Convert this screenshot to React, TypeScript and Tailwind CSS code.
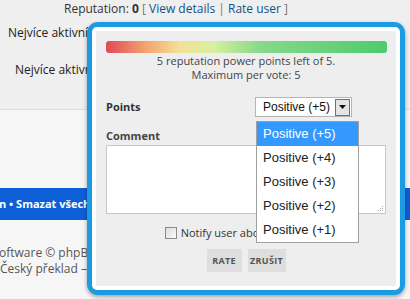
import React from 'react';

const options = ['Positive (+5)', 'Positive (+4)', 'Positive (+3)', 'Positive (+2)', 'Positive (+1)'];

export default function App() {
  return (
    <div className="relative w-[410px] h-[299px] overflow-hidden bg-[#efefef] font-['Open_Sans',sans-serif] text-[#333]">
      {/* Page behind the popup */}
      <div className="h-[110px] border-b border-[#dcdcdc] text-[12px] leading-[16px]">
        <div className="pl-[64px] pt-[1px] whitespace-nowrap">
          Reputation: <b>0</b> <span className="text-[#777]">[</span>{' '}
          <span className="text-[#105289]">View details</span> <span className="text-[#777]">|</span>{' '}
          <span className="text-[#105289]">Rate user</span> <span className="text-[#777]">]</span>
        </div>
        <div className="pl-[8px] pt-[8px] text-[#222]">Nejvíce aktivní v diskusi</div>
        <div className="pl-[15px] pt-[21px] text-[#222]">Nejvíce aktivní v tématu</div>
      </div>
      <div className="h-[78px] bg-[#f6f6f6]" />
      <div className="h-[32px] bg-[#0d5fd8] overflow-hidden flex items-center">
        <span className="ml-[-1px] whitespace-nowrap text-white text-[11px] font-bold">n • Smazat všechny cookies fóra</span>
      </div>
      <div className="h-[79px] bg-[#f6f6f6] overflow-hidden text-[12px] leading-[16px] text-[#555] pt-[25px]">
        <div className="ml-[-1px] whitespace-nowrap">oftware © phpBB Group</div>
        <div className="whitespace-nowrap">Český překlad – phpBB.cz</div>
      </div>

      {/* Rating popup */}
      <div className="absolute left-[87px] top-[22px] w-[318px] h-[273px] rounded-[11px] bg-[#1a9be2] p-[5px] shadow-[0_2px_4px_rgba(0,0,0,0.35)]">
        <div className="h-full rounded-[5px] border-4 border-white bg-[#eeeeee] px-[10px] pt-[10px] text-[11px] leading-[14px]">
          <div className="h-[12px] w-[281px] rounded-[3px] bg-[linear-gradient(to_right,#e0485a_0%,#f3a26e_14%,#f5df97_26%,#d8f0a0_38%,#86d98a_55%,#4fca6e_100%)]" />
          <div className="mt-[1px] text-center text-[#444]">
            <div>5 reputation power points left of 5.</div>
            <div>Maximum per vote: 5</div>
          </div>

          <div className="mt-[15px] flex items-center">
            <span className="w-[149px] font-bold text-[#333]">Points</span>
            <div className="flex h-[20px] w-[97px] items-center justify-between border border-[#b5b5b5] bg-white pl-[7px] pr-[1px] font-['Liberation_Sans',sans-serif] text-[12px] text-[#111]">
              <span>Positive (+5)</span>
              <span className="flex h-[17px] w-[15px] items-center justify-center border border-[#707070] bg-[#e4e4e4]">
                <svg width="7" height="4" viewBox="0 0 7 4"><path d="M0 0h7L3.5 4z" fill="#111" /></svg>
              </span>
            </div>
          </div>

          <div className="mt-[12px] font-bold text-[#444]">Comment</div>
          <div className="relative mt-[2px] h-[69px] w-[280px] border border-[#c8c8c8] bg-white">
            <svg className="absolute right-[1px] bottom-[1px]" width="7" height="7" viewBox="0 0 7 7">
              <g fill="#aaa">
                <rect x="5" y="1" width="1" height="1" />
                <rect x="3" y="3" width="1" height="1" />
                <rect x="5" y="3" width="1" height="1" />
                <rect x="1" y="5" width="1" height="1" />
                <rect x="3" y="5" width="1" height="1" />
                <rect x="5" y="5" width="1" height="1" />
              </g>
            </svg>
          </div>

          <div className="mt-[12px] flex items-center justify-center gap-[4px] pr-[3px]">
            <span className="h-[12px] w-[12px] border border-[#8a8a8a] bg-[linear-gradient(135deg,#dcdcdc,#fafafa)]" />
            <span className="text-[#333]">Notify user about this rating</span>
          </div>

          <div className="mt-[9px] flex justify-center gap-[6px]">
            <span className="flex h-[23px] w-[35px] items-center justify-center bg-[#dedede] text-[9px] font-bold tracking-[0.3px] text-[#555]">RATE</span>
            <span className="flex h-[23px] w-[38px] items-center justify-center bg-[#dedede] text-[9px] font-bold tracking-[0.3px] text-[#555]">ZRUŠIT</span>
          </div>
        </div>
      </div>

      {/* Open select list */}
      <div className="absolute left-[256px] top-[121px] w-[103px] border border-[#a0a0a0] bg-white font-['Liberation_Sans',sans-serif] text-[13px] text-[#222]">
        {options.map((o, i) => (
          <div key={o} className={i === 0 ? 'h-[24px] leading-[24px] pl-[6px] bg-[#3399ff] text-white' : 'h-[24px] leading-[24px] pl-[6px]'}>
            {o}
          </div>
        ))}
      </div>
    </div>
  );
}
